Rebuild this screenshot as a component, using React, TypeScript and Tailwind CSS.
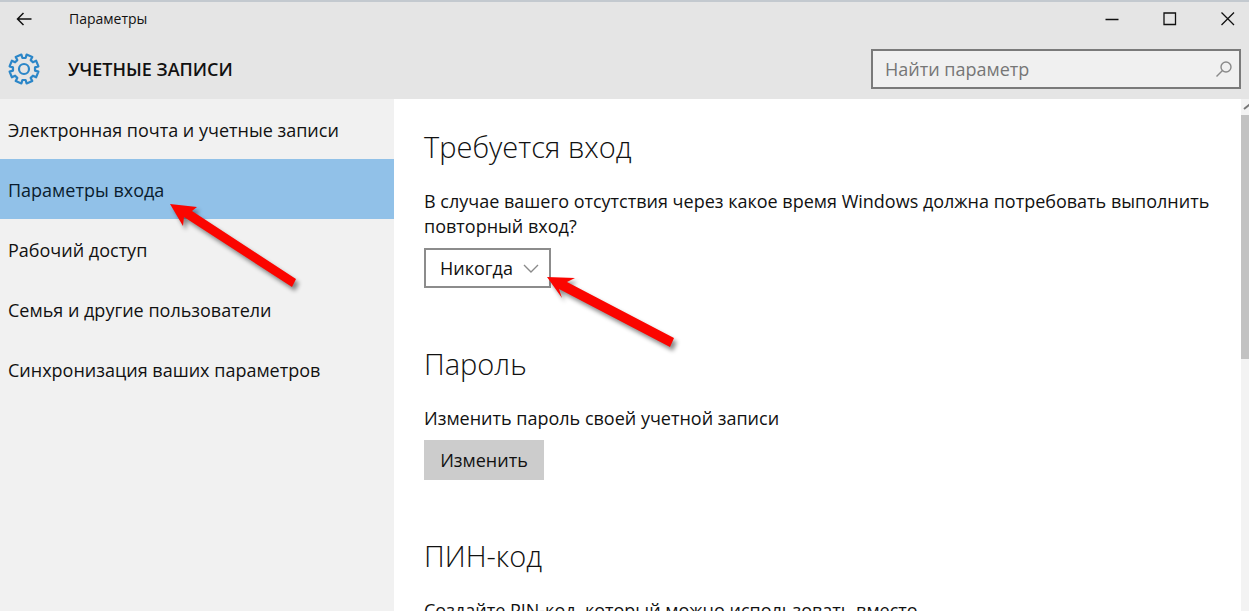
import { useState } from "react";

const navItems = [
  "Электронная почта и учетные записи",
  "Параметры входа",
  "Рабочий доступ",
  "Семья и другие пользователи",
  "Синхронизация ваших параметров",
];

function GearIcon() {
  return (
    <svg
      viewBox="0 0 32 32"
      className="h-8 w-8"
      fill="none"
      stroke="#2b86c8"
      strokeWidth="2.2"
      strokeLinejoin="round"
    >
      <path d="M14.4 5 17.6 5 18.6 1.6 24.3 3.9 22.7 7.1 24.9 9.3 28.1 7.7 30.4 13.4 27 14.4V17.6L30.4 18.6 28.1 24.3 24.9 22.7 22.7 24.9 24.3 28.1 18.6 30.4 17.6 27H14.4L13.4 30.4 7.7 28.1 9.3 24.9 7.1 22.7 3.9 24.3 1.6 18.6 5 17.6V14.4L1.6 13.4 3.9 7.7 7.1 9.3 9.3 7.1 7.7 3.9 13.4 1.6Z" />
      <circle cx="16" cy="16" r="5" />
    </svg>
  );
}

function TitleBar() {
  return (
    <div className="flex h-9 items-center justify-between border-t-2 border-[#c3c9cf]">
      <div className="flex items-center">
        <button type="button" aria-label="Назад" className="flex w-[69px] pl-4">
          <svg viewBox="0 0 16 16" className="h-4 w-4" fill="none" stroke="#111" strokeWidth="1.5">
            <path d="M15.5 8H1.5M7.5 2 1.5 8l6 6" />
          </svg>
        </button>
        <span className="text-sm">Параметры</span>
      </div>
      <div className="flex gap-11 pr-3.5">
        <button type="button" aria-label="Свернуть">
          <svg viewBox="0 0 14 14" className="h-3.5 w-3.5" stroke="#111" strokeWidth="1.5">
            <path d="M.5 7.5h13" />
          </svg>
        </button>
        <button type="button" aria-label="Развернуть">
          <svg viewBox="0 0 14 14" className="h-3.5 w-3.5" fill="none" stroke="#111" strokeWidth="1.3">
            <path d="M1 1h11.5v11.5H1z" />
          </svg>
        </button>
        <button type="button" aria-label="Закрыть">
          <svg viewBox="0 0 14 14" className="h-3.5 w-3.5" stroke="#111" strokeWidth="1.3">
            <path d="m.5.5 12.5 12.5M13 .5.5 13" />
          </svg>
        </button>
      </div>
    </div>
  );
}

function SearchBox() {
  return (
    <label className="flex h-10 w-[370px] items-center border-2 border-[#7a7a7a] bg-[#f0f0f0] pr-1.5 pl-3">
      <input
        type="text"
        aria-label="Найти параметр"
        placeholder="Найти параметр"
        className="min-w-0 flex-1 bg-transparent text-lg outline-none placeholder:text-[#767676]"
      />
      <svg viewBox="0 0 18 18" className="h-[18px] w-[18px]" fill="none" stroke="#8a8a8a" strokeWidth="1.4">
        <circle cx="11" cy="7" r="5" />
        <path d="M7.5 10.5 1.5 16.5" />
      </svg>
    </label>
  );
}

function Sidebar() {
  const [active, setActive] = useState(1);

  return (
    <nav className="w-[394px] shrink-0 bg-[#f1f1f1]">
      {navItems.map((item, i) => (
        <div key={item} className="relative">
          <button
            type="button"
            onClick={() => setActive(i)}
            className={`flex h-[60px] w-full items-center pt-0.5 pl-2 text-left text-lg ${
              i === active ? "bg-[#91c1e8] text-[#0a1c2e]" : ""
            }`}
          >
            {item}
          </button>
          {i === 1 && (
            <svg
              viewBox="0 0 140 96"
              className="pointer-events-none absolute top-10 left-[166px] z-10 h-24 w-[140px] drop-shadow-[3px_4px_2px_rgba(0,0,0,0.45)]"
            >
              <path fill="#fb0500" d="M4 5 31 8 26 12 130 80 126 88 18 18 17 27Z" />
            </svg>
          )}
        </div>
      ))}
    </nav>
  );
}

function RequireSignIn() {
  return (
    <section>
      <h2 className="font-light text-[29px] leading-10">Требуется вход</h2>
      <label htmlFor="sign-in" className="mt-[22px] block text-lg leading-[25px]">
        В случае вашего отсутствия через какое время Windows должна потребовать выполнить повторный
        вход?
      </label>
      <div className="relative mt-[9px] w-[127px]">
        <select
          id="sign-in"
          className="h-10 w-full appearance-none border-2 border-[#8c8c8c] bg-white pl-3.5 text-lg outline-none"
        >
          <option>Никогда</option>
        </select>
        <svg
          viewBox="0 0 16 10"
          className="pointer-events-none absolute top-4 right-3 h-2.5 w-4"
          fill="none"
          stroke="#8a8a8a"
          strokeWidth="1.4"
        >
          <path d="m1 1 7 7 7-7" />
        </svg>
        <svg
          viewBox="0 0 140 80"
          className="pointer-events-none absolute top-6 left-[118px] z-10 h-20 w-[140px] drop-shadow-[3px_4px_2px_rgba(0,0,0,0.45)]"
        >
          <path fill="#fb0500" d="M5 5 33 6 25 10 132 66 128 75 17 17 20 26Z" />
        </svg>
      </div>
    </section>
  );
}

function Scrollbar() {
  return (
    <div className="w-2 shrink-0 overflow-hidden bg-[#f3f3f3]">
      <div className="flex h-4 items-center pl-0.5">
        <svg viewBox="0 0 12 8" className="h-2 w-3 shrink-0" fill="none" stroke="#777" strokeWidth="2">
          <path d="m1 6 5-4 5 4" />
        </svg>
      </div>
      <div className="h-[244px] bg-[#c2c2c2]" />
    </div>
  );
}

export default function App() {
  return (
    <div className="flex h-screen flex-col overflow-hidden bg-white font-['Open_Sans','Noto_Sans',sans-serif] text-[#111]">
      <header className="shrink-0 bg-[#e5e5e5]">
        <TitleBar />
        <div className="flex h-[63px] items-center justify-between px-2 pt-0.5">
          <div className="flex items-center gap-7">
            <GearIcon />
            <h1 className="text-lg font-semibold">УЧЕТНЫЕ ЗАПИСИ</h1>
          </div>
          <SearchBox />
        </div>
      </header>
      <div className="flex min-h-0 flex-1">
        <Sidebar />
        <main className="min-w-0 flex-1 overflow-hidden pt-7 pr-6 pl-[30px]">
          <RequireSignIn />
          <section className="mt-14">
            <h2 className="font-light text-[29px] leading-10">Пароль</h2>
            <p className="mt-[22px] text-lg leading-[25px]">Изменить пароль своей учетной записи</p>
            <button type="button" className="mt-[9px] h-10 w-[120px] bg-[#cccccc] text-lg">
              Изменить
            </button>
          </section>
          <section className="mt-14">
            <h2 className="font-light text-[29px] leading-10">ПИН-код</h2>
            <p className="mt-[22px] text-lg leading-[25px]">
              Создайте PIN-код, который можно использовать вместо
            </p>
          </section>
        </main>
        <Scrollbar />
      </div>
    </div>
  );
}
